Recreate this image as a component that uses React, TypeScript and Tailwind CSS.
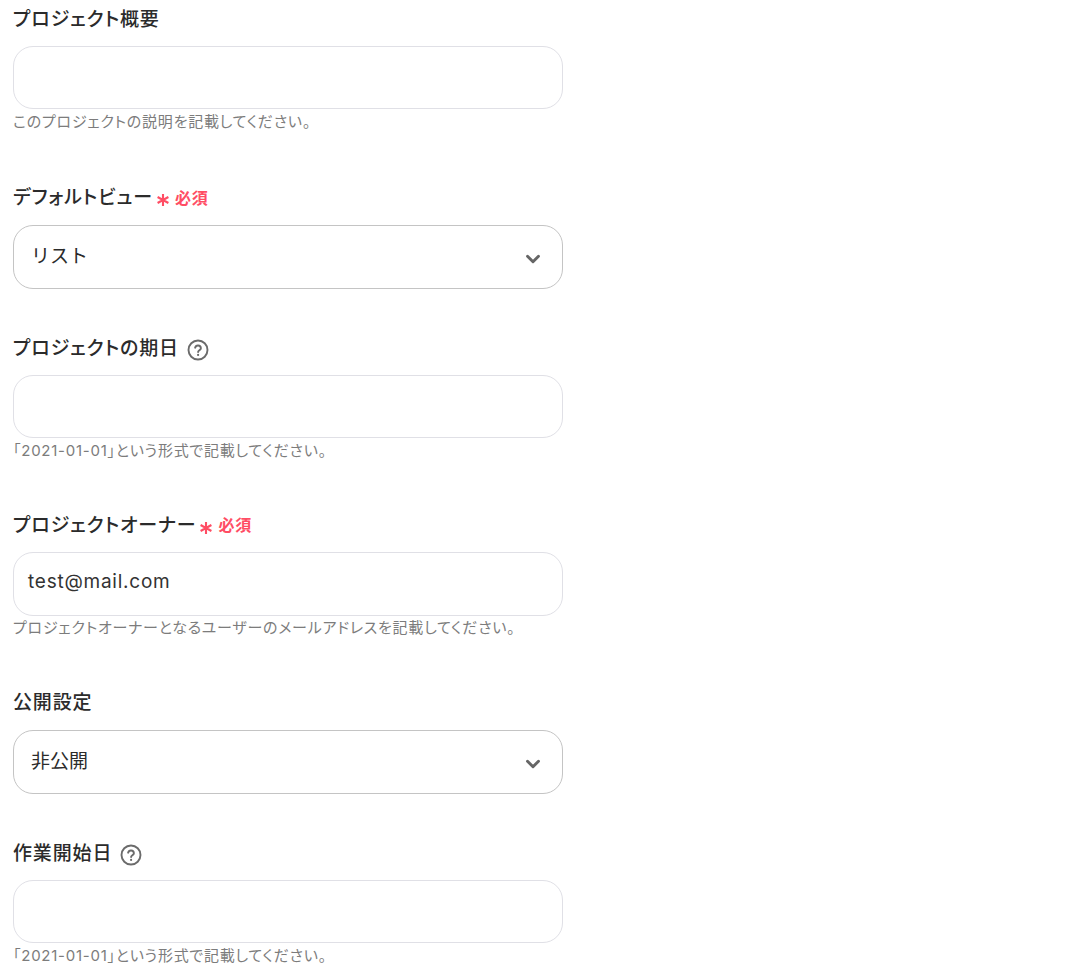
import { ChevronDown } from "lucide-react";

const font = "font-['Inter','Noto_Sans_CJK_JP',sans-serif]";

function HelpIcon() {
  return (
    <svg width="22" height="22" viewBox="0 0 22 22" fill="none" className="ml-[8px] mt-[3px] text-[#6b6b6b]">
      <circle cx="11" cy="11" r="9.5" stroke="currentColor" strokeWidth="1.9" />
      <path d="M8.1 8.7a2.95 2.95 0 0 1 5.8.5c0 1.9-2.8 2.3-2.8 3.9" stroke="currentColor" strokeWidth="1.9" strokeLinecap="round" />
      <circle cx="11.1" cy="15.9" r="1.1" fill="currentColor" />
    </svg>
  );
}

function Required() {
  return (
    <span className="ml-[3px] flex items-center text-[#ff4d64]">
      <svg width="14" height="14" viewBox="0 0 14 14" fill="none" className="mt-[5px]">
        <path d="M7 1v12M1.6 4l10.8 6M12.4 4 1.6 10" stroke="currentColor" strokeWidth="2.1" />
      </svg>
      <span className="ml-[5px] text-[16px] font-semibold tracking-[0.05em]">必須</span>
    </span>
  );
}

function Label({ text, required, help }: { text: string; required?: boolean; help?: boolean }) {
  return (
    <div className="flex h-6 items-center text-[19px] font-medium leading-6 tracking-[0.045em] text-[#2b2b2b] [font-feature-settings:'palt']">
      <span className="pt-px">{text}</span>
      {required && <Required />}
      {help && <HelpIcon />}
    </div>
  );
}

function TextField({ label, value, hint, required, help }: { label: string; value?: string; hint: string; required?: boolean; help?: boolean }) {
  return (
    <div className="mb-[52.5px]">
      <Label text={label} required={required} help={help} />
      <div className="mt-[15px] flex h-[63.25px] w-[550px] items-center rounded-[20px] border border-[#e0e0e6] px-[14px] pb-1 text-[19px] tracking-[0.04em] text-[#333]">
        {value}
      </div>
      <p className="mt-[2.5px] h-5 text-[15px] leading-5 tracking-[0.05em] text-[#7c7c7c] [font-feature-settings:'palt']">{hint}</p>
    </div>
  );
}

function SelectField({ label, value, required }: { label: string; value: string; required?: boolean }) {
  return (
    <div className="mb-[47px]">
      <Label text={label} required={required} />
      <div className="mt-[15.5px] flex h-16 w-[550px] items-center justify-between rounded-[20px] border border-[#c4c4c4] pl-[17px] pr-[18px] text-[19px] text-[#2b2b2b]">
        <span>{value}</span>
        <ChevronDown size={22} strokeWidth={3.2} className="mt-[3px] text-[#666]" />
      </div>
    </div>
  );
}

export default function App() {
  return (
    <div className={`${font} h-[967px] overflow-hidden bg-white pl-[13px] pt-[7px]`}>
      <div className="pb-[1.25px]">
        <TextField label="プロジェクト概要" hint="このプロジェクトの説明を記載してください。" />
      </div>
      <SelectField label="デフォルトビュー" value="リスト" required />
      <TextField label="プロジェクトの期日" hint="「2021-01-01」という形式で記載してください。" help />
      <TextField label="プロジェクトオーナー" value="test@mail.com" hint="プロジェクトオーナーとなるユーザーのメールアドレスを記載してください。" required />
      <SelectField label="公開設定" value="非公開" />
      <TextField label="作業開始日" hint="「2021-01-01」という形式で記載してください。" help />
    </div>
  );
}
